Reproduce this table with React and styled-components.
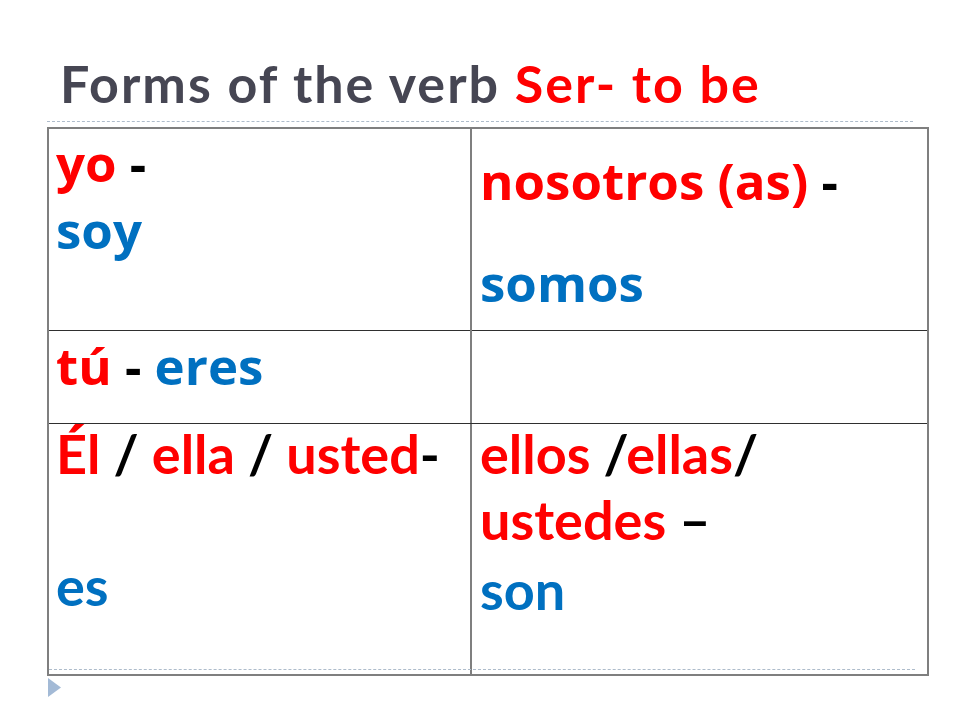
import React from 'react'
import styled, { createGlobalStyle } from 'styled-components'

const GlobalStyle = createGlobalStyle`
  html, body {
    margin: 0;
    padding: 0;
    background: #fff;
  }
`

const rows = [
  {
    height: 202,
    left: [
      { lh: 67, parts: [['red', 'yo'], ['black', ' -']] },
      { lh: 67, parts: [['blue', 'soy']] },
    ],
    right: [
      { lh: 102, parts: [['red', 'nosotros (as)'], ['black', ' -']] },
      { lh: 102, parts: [['blue', 'somos']] },
    ],
    leftFont: 'tahoma',
    rightFont: 'tahoma',
  },
  {
    height: 93,
    left: [
      { lh: 67, top: 1, parts: [['red', 'tú'], ['black', ' - '], ['blue', 'eres']] },
    ],
    right: [],
    leftFont: 'tahoma',
    rightFont: 'tahoma',
  },
  {
    height: 250,
    left: [
      { lh: 60, parts: [['red', 'Él'], ['black', ' / '], ['red', 'ella'], ['black', ' / '], ['red', 'usted'], ['black', '-']] },
      { lh: 60, top: 72, parts: [['blue', 'es']] },
    ],
    right: [
      { lh: 66, top: -3, parts: [['red', 'ellos '], ['black', '/'], ['red', 'ellas'], ['black', '/']] },
      { lh: 66, parts: [['red', 'ustedes'], ['black', ' –']] },
      { lh: 66, top: 4, parts: [['blue', 'son']] },
    ],
    leftFont: 'gill',
    rightFont: 'gill',
  },
]

const colors = {
  red: '#ff0000',
  blue: '#0070c0',
  black: '#000000',
}

function Cell({ lines, font, side }) {
  return (
    <TableCell $side={side} $font={font}>
      {lines.map((line, i) => (
        <Line key={i} $lh={line.lh} $top={line.top || 0}>
          {line.parts.map(([c, t], j) => (
            <Word key={j} $color={colors[c]}>{t}</Word>
          ))}
        </Line>
      ))}
    </TableCell>
  )
}

export default function App() {
  return (
    <>
      <GlobalStyle />
      <Slide>
        <Title>
          Forms of the verb <TitleAccent>Ser- to be</TitleAccent>
        </Title>
        <Rule />
        <Table>
          {rows.map((row, i) => (
            <Row key={i} $height={row.height} $last={i === rows.length - 1}>
              <Cell lines={row.left} font={row.leftFont} side="left" />
              <Cell lines={row.right} font={row.rightFont} side="right" />
            </Row>
          ))}
          <BottomRule />
        </Table>
        <Bullet width="14" height="20" viewBox="0 0 14 20">
          <polygon points="0,0 13,9.5 0,19" fill="#a3bad6" />
        </Bullet>
      </Slide>
    </>
  )
}

const Slide = styled.div`
  width: 960px;
  height: 720px;
  background: #fff;
  box-sizing: border-box;
  padding-top: 51px;
  overflow: hidden;
`

const Title = styled.h1`
  margin: 0 0 0 60px;
  font-family: Lato, "Open Sans", sans-serif;
  font-weight: 700;
  font-size: 52px;
  line-height: 64px;
  color: #464653;
  letter-spacing: 2px;
  height: 70px;
  white-space: nowrap;
`

const TitleAccent = styled.span`
  color: #ff0000;
`

const Rule = styled.div`
  margin-left: 47px;
  width: 866px;
  height: 0;
  border-top: 1px dashed #aebccb;
`

const Table = styled.div`
  position: relative;
  margin: 5px 0 0 47px;
  width: 882px;
  border: 2px solid #7f7f7f;
  box-sizing: border-box;
`

const Row = styled.div`
  display: grid;
  grid-template-columns: 423px 1fr;
  height: ${p => p.$height}px;
  box-sizing: border-box;
  border-bottom: ${p => (p.$last ? 'none' : '1px solid #2f2f2f')};
`

const TableCell = styled.div`
  padding: 0 ${p => (p.$side === 'left' ? '7px' : '8px')};
  border-right: ${p => (p.$side === 'left' ? '2px solid #7f7f7f' : 'none')};
  font-family: ${p =>
    p.$font === 'gill'
      ? 'Lato, "Open Sans", sans-serif'
      : '"Open Sans", "DejaVu Sans", sans-serif'};
  font-weight: 700;
  font-size: ${p => (p.$font === 'gill' ? '54px' : '51px')};
  white-space: pre;
`

const Line = styled.div`
  line-height: ${p => p.$lh}px;
  margin-top: ${p => p.$top}px;
`

const Word = styled.span`
  color: ${p => p.$color};
`

const BottomRule = styled.div`
  position: absolute;
  left: 0;
  bottom: 4px;
  width: 866px;
  border-top: 1px dashed #aebccb;
`

const Bullet = styled.svg`
  display: block;
  margin: 2px 0 0 48px;
`
